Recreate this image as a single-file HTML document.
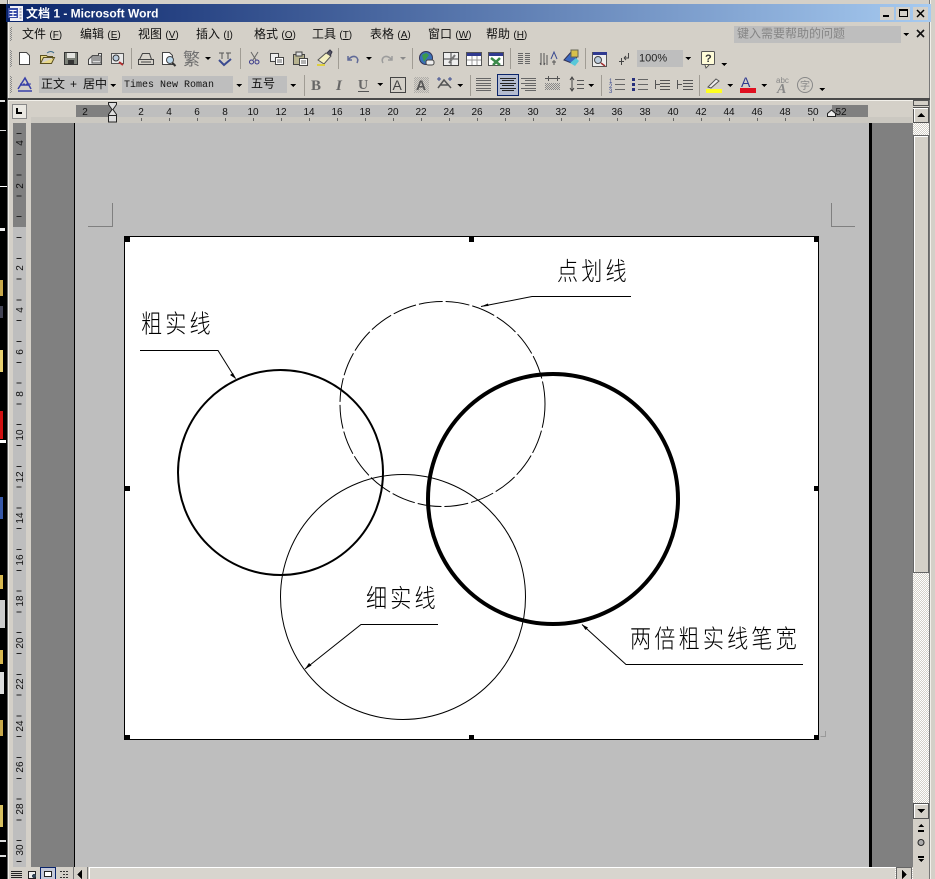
<!DOCTYPE html>
<html><head><meta charset="utf-8"><title>文档 1 - Microsoft Word</title>
<style>
html,body{margin:0;padding:0;width:935px;height:879px;overflow:hidden;background:#000}
svg{display:block}
text{font-family:"Liberation Sans","Noto Sans CJK SC",sans-serif}
.m{font-size:12px;fill:#111}
.m tspan{font-size:10px}
.r{font-size:10px;fill:#111;text-anchor:middle}
.d{font-size:24px;font-weight:300;fill:#000;letter-spacing:3.6px;font-family:"Noto Sans CJK SC",sans-serif}
</style></head><body>
<svg width="935" height="879" viewBox="0 0 935 879" xmlns="http://www.w3.org/2000/svg" shape-rendering="crispEdges">
<defs>
<linearGradient id="tb" x1="0" x2="1" y1="0" y2="0"><stop offset="0" stop-color="#0a246a"/><stop offset="1" stop-color="#a6caf0"/></linearGradient>
<pattern id="ck" width="2" height="2" patternUnits="userSpaceOnUse"><rect width="2" height="2" fill="#d4d0c8"/><rect width="1" height="1" fill="#fff"/><rect x="1" y="1" width="1" height="1" fill="#fff"/></pattern>
<pattern id="ck2" width="2" height="2" patternUnits="userSpaceOnUse"><rect width="2" height="2" fill="#d4d0c8"/><rect width="1" height="1" fill="#888"/><rect x="1" y="1" width="1" height="1" fill="#888"/></pattern>
</defs>
<!-- desktop edge -->
<rect width="7" height="879" fill="#000"/>
<g>
<rect x="0" y="186" width="7" height="1" fill="#fff"/><rect x="0" y="228" width="5" height="3" fill="#eee"/>
<rect x="0" y="280" width="3" height="16" fill="#c8a84a"/><rect x="0" y="306" width="3" height="12" fill="#445"/>
<rect x="0" y="350" width="3" height="22" fill="#e8d070"/><rect x="0" y="411" width="3" height="28" fill="#d01010"/>
<rect x="0" y="440" width="6" height="3" fill="#fff"/><rect x="0" y="497" width="3" height="22" fill="#3858a8"/>
<rect x="0" y="575" width="3" height="14" fill="#d8b850"/><rect x="0" y="600" width="5" height="28" fill="#ccc"/>
<rect x="0" y="650" width="3" height="14" fill="#d8b850"/><rect x="0" y="672" width="4" height="22" fill="#ddd"/>
<rect x="0" y="720" width="3" height="16" fill="#c8a84a"/><rect x="0" y="805" width="3" height="22" fill="#d8c060"/>
<rect x="0" y="840" width="6" height="2" fill="#ddd"/><rect x="0" y="855" width="6" height="2" fill="#ddd"/>
<rect x="0" y="100" width="5" height="2" fill="#ddd"/><rect x="0" y="130" width="6" height="1" fill="#ddd"/>
</g>
<!-- window -->
<rect x="7" y="0" width="928" height="879" fill="#d4d0c8"/>
<rect x="0" y="0" width="935" height="4" fill="#d4d0c8"/>
<rect x="7" y="0" width="1" height="879" fill="#666"/>
<rect x="8" y="0" width="1" height="879" fill="#efece6"/>
<rect x="929" y="0" width="1" height="879" fill="#777"/>
<rect x="930" y="0" width="1" height="879" fill="#f2f0ea"/>
<!-- title bar -->
<rect x="6" y="4" width="925" height="18" fill="url(#tb)"/>
<rect x="10" y="6" width="13" height="15" fill="#f0f0f8"/>
<rect x="8" y="8" width="10" height="10" fill="#3a4ea8"/>
<path d="M9.500 10.500h7M13 10v7M9.500 13.500h7M9.500 16.500h7" stroke="#fff" fill="none"/>
<path d="M19.500 9h2M19.500 12h2M19.500 15h2M19.500 18h2" stroke="#778" fill="none"/>
<text x="26" y="17.500" style="font-size:12px;font-weight:700;fill:#fff">文档 1 - Microsoft Word</text>
<g>
<rect x="880" y="7" width="14" height="13" fill="#d4d0c8"/><rect x="883" y="15" width="6" height="2" fill="#000"/>
<rect x="896" y="7" width="14" height="13" fill="#d4d0c8"/><rect x="899.500" y="9.500" width="8" height="7" fill="none" stroke="#000"/><rect x="899" y="9" width="9" height="2" fill="#000"/>
<rect x="913" y="7" width="15" height="13" fill="#d4d0c8"/><path d="M917 10l7 7M924 10l-7 7" stroke="#000" stroke-width="1.500" fill="none" shape-rendering="auto"/>
</g>
<!-- grippers -->
<rect x="10" y="27" width="2" height="14" fill="url(#ck2)"/><rect x="10" y="50" width="2" height="17" fill="url(#ck2)"/><rect x="10" y="76" width="2" height="17" fill="url(#ck2)"/>
<!-- menu -->
<text class="m" x="22" y="38">文件 <tspan>(<tspan text-decoration="underline">F</tspan>)</tspan></text>
<text class="m" x="80" y="38">编辑 <tspan>(<tspan text-decoration="underline">E</tspan>)</tspan></text>
<text class="m" x="138" y="38">视图 <tspan>(<tspan text-decoration="underline">V</tspan>)</tspan></text>
<text class="m" x="196" y="38">插入 <tspan>(<tspan text-decoration="underline">I</tspan>)</tspan></text>
<text class="m" x="254" y="38">格式 <tspan>(<tspan text-decoration="underline">O</tspan>)</tspan></text>
<text class="m" x="312" y="38">工具 <tspan>(<tspan text-decoration="underline">T</tspan>)</tspan></text>
<text class="m" x="370" y="38">表格 <tspan>(<tspan text-decoration="underline">A</tspan>)</tspan></text>
<text class="m" x="428" y="38">窗口 <tspan>(<tspan text-decoration="underline">W</tspan>)</tspan></text>
<text class="m" x="486" y="38">帮助 <tspan>(<tspan text-decoration="underline">H</tspan>)</tspan></text>
<rect x="734" y="26" width="178" height="17" fill="#bebebe"/>
<rect x="901" y="26" width="11" height="17" fill="#d4d0c8"/>
<text x="737" y="37.500" style="font-size:12px;fill:#858585;font-family:'Noto Sans CJK SC',sans-serif">键入需要帮助的问题</text>
<path d="M903 33h6l-3 3z" fill="#000"/>
<path d="M917 30l7 7M924 30l-7 7" stroke="#111" stroke-width="1.600" fill="none" shape-rendering="auto"/>
<!-- toolbar separators -->
<path d="M131.500 48v21M240.500 48v21M338.500 48v21M412.500 48v21M510.500 48v21M585.500 48v21M304.500 75v21M470.500 75v21M601.500 75v21M699.500 75v21" stroke="#a09c94" fill="none"/>
<!-- row 2 icons -->
<g shape-rendering="auto" fill="none" stroke-width="1">
<path d="M19.500 52.500h7l3 3v9h-10z" fill="#fff" stroke="#444"/>
<path d="M40.500 63.500v-8h6l1 1h5v2M40.500 63.500h11l3-6h-11z" fill="#e8d888" stroke="#5a5020"/><path d="M47 53q4-3 7 0" stroke="#3a6a8a"/>
<rect x="64.500" y="52.500" width="13" height="12" fill="#7c8078" stroke="#333"/><rect x="67" y="53" width="8" height="5" fill="#e4e4e0"/><rect x="68" y="60" width="6" height="4" fill="#333"/>
<path d="M88.500 64.500v-5l4-4h6v-2h3v11z" fill="#eee" stroke="#444"/><rect x="92" y="56" width="9" height="7" fill="#ddd" stroke="#555"/><path d="M93 58h7M93 60h7" stroke="#555"/>
<rect x="111.500" y="53.500" width="12" height="10" fill="#e8e8e8" stroke="#555"/><circle cx="116" cy="58" r="3" fill="#bcd" stroke="#333"/><path d="M119 62l4 3" stroke="#b03030" stroke-width="2"/>
<path d="M139.500 59.500l3-6h7l2 6zM138.500 59.500h15v5h-15z" fill="#d8d4cc" stroke="#444"/><path d="M141 62h10" stroke="#444"/>
<path d="M162.500 52.500h7l3 3v9h-10z" fill="#fff" stroke="#444"/><circle cx="170" cy="60" r="3.500" fill="#bcd8ec" stroke="#444"/><path d="M172.500 63l3 3" stroke="#333" stroke-width="2"/>
<text x="183" y="65" style="font-size:17px;fill:#707070">繁</text>
<path d="M205 57h6l-3 3z" fill="#000"/>
<path d="M219 53h5M222 53v6M226 53h5M228 53v6" stroke="#555"/><path d="M219 60l5 5 7-6" stroke="#3a4a90" stroke-width="2"/>
<path d="M251 52l5 8M258 52l-5 8" stroke="#666"/><circle cx="251.500" cy="62" r="2" stroke="#3a3a8a"/><circle cx="257" cy="62" r="2" stroke="#3a3a8a"/>
<rect x="270.500" y="53.500" width="8" height="8" fill="#eee" stroke="#444"/><rect x="275.500" y="57.500" width="8" height="7" fill="#fff" stroke="#444"/><path d="M277 60h5M277 62h5" stroke="#666"/>
<rect x="293.500" y="54.500" width="11" height="10" fill="#b8b490" stroke="#444"/><rect x="296" y="52" width="6" height="4" fill="#ddd" stroke="#444"/><rect x="299.500" y="58.500" width="8" height="7" fill="#fff" stroke="#444"/><path d="M301 61h5M301 63h5" stroke="#666"/>
<path d="M318 60l8-7 5 3-7 8z" fill="#f4f0c0" stroke="#555"/><path d="M327 53l3-3 2 2-2 4" fill="#556" stroke="#334"/><path d="M317 65h8" stroke="#dfd040" stroke-width="2"/>
<path d="M348 56v4h4M348 60q4-5 8-3 3 2 1 6" stroke="#606a98" stroke-width="1.500"/>
<path d="M366 57h6l-3 3z" fill="#000"/>
<path d="M392 56v4h-4M392 60q-4-5-8-3-3 2-1 6" stroke="#9c9c9c" stroke-width="1.500"/>
<path d="M400 57h6l-3 3z" fill="#8a8a8a"/>
<circle cx="426" cy="58" r="6.500" fill="#3a70b8" stroke="#335"/><path d="M422 55l4-2 3 2-3 4-2 3z" fill="#3a9a4a"/><rect x="426" y="60" width="8" height="5" rx="2" fill="#eee" stroke="#444"/>
<rect x="443.500" y="52.500" width="15" height="13" fill="#eee" stroke="#444"/><path d="M451 53v12M444 59h14" stroke="#444"/><path d="M449 63l6-8" stroke="#777" stroke-width="2"/>
<rect x="466.500" y="52.500" width="15" height="13" fill="#fff" stroke="#555"/><rect x="467" y="53" width="14" height="3" fill="#303a90"/><path d="M467 60h14M472 56v9M477 56v9" stroke="#999"/>
<rect x="488.500" y="52.500" width="15" height="13" fill="#fff" stroke="#555"/><rect x="489" y="53" width="14" height="3" fill="#303a90"/><path d="M491 58l9 7M500 58l-7 7" stroke="#3a8a4a" stroke-width="2.500"/>
<path d="M541 53v12M544 53v12M547 55v10M541 65l-1-2M544 65l1-2" stroke="#555"/><path d="M551 59l3-7 3 7" stroke="#3a4a90"/><path d="M552 62h4M554 60v5" stroke="#555"/>
<path d="M564 60l8-9 6 3-4 10z" fill="#3a68c0" stroke="#335"/><rect x="571" y="50" width="7" height="7" fill="#d8c04a" stroke="#665"/><path d="M570 63l6-5 3 3-4 5z" fill="#58c8d8"/>
<rect x="592.500" y="52.500" width="14" height="14" fill="#eee" stroke="#555"/><rect x="593" y="52" width="14" height="3" fill="#303a90"/><circle cx="598" cy="60" r="3.500" fill="#bcd" stroke="#444"/><path d="M601 63l4 3" stroke="#a03030" stroke-width="1.500"/>
<path d="M628.500 53v5h-4M624 58l2-2M624 58l2 2M621.500 58v7M619 61.500h5" stroke="#444"/>
<rect x="637" y="50" width="52" height="17" fill="#bebebe" stroke="none"/>
<rect x="701.500" y="51.500" width="13" height="13" rx="1" fill="#fffcd8" stroke="#555"/><path d="M705 65l1 3 3-3" fill="#fffcd8" stroke="#555"/>
</g>
<path d="M518 53.500h5M525 53.500h5M518 55.500h5M525 55.500h5M518 57.500h5M525 57.500h5M518 59.500h5M525 59.500h5M518 61.500h5M525 61.500h5M518 63.500h5M525 63.500h5" stroke="#666" fill="none" transform="translate(0 0)"/>
<rect x="683" y="50" width="11" height="17" fill="#d4d0c8"/>
<text x="639" y="61.500" style="font-size:11px;fill:#222">100%</text>
<path d="M685 57h6l-3 3z" fill="#000"/>
<text x="705" y="62" style="font-size:11px;font-weight:700;fill:#333">?</text>
<path d="M721 63h6l-3 3z" fill="#000"/>
<!-- row 3 -->
<g shape-rendering="auto" fill="none">
<path d="M18 89l7-11 6 11" stroke="#3840a8" stroke-width="1.500"/><path d="M21 85h8M18 91h14" stroke="#3840a8" stroke-width="1.500"/><path d="M20 84h12" stroke="#3840a8" stroke-dasharray="2 1"/>
</g>
<rect x="39" y="76" width="79" height="17" fill="#bebebe"/><rect x="108" y="76" width="11" height="17" fill="#d4d0c8"/>
<text x="41" y="88" style="font-size:12px;fill:#111;font-family:'Noto Sans CJK SC',sans-serif">正文</text>
<text x="70" y="88" style="font-size:12px;fill:#111">+</text>
<text x="83" y="88" style="font-size:12px;fill:#111;font-family:'Noto Sans CJK SC',sans-serif">居中</text>
<path d="M110 84h6l-3 3z" fill="#000"/>
<rect x="122" y="76" width="122" height="17" fill="#bebebe"/><rect x="233" y="76" width="11" height="17" fill="#d4d0c8"/>
<text x="124" y="87" style="font-size:10px;fill:#111;font-family:'Liberation Mono',monospace">Times New Roman</text>
<path d="M236 84h6l-3 3z" fill="#000"/>
<rect x="248" y="76" width="53" height="17" fill="#bebebe"/><rect x="287" y="76" width="14" height="17" fill="#d4d0c8"/>
<text x="251" y="87.500" style="font-size:12px;fill:#111;font-family:'Noto Sans CJK SC',sans-serif">五号</text>
<path d="M290 84h6l-3 3z" fill="#000"/>
<text x="311" y="90" style="font-size:15px;font-weight:700;fill:#666;font-family:'Liberation Serif',serif">B</text>
<text x="336" y="90" style="font-size:15px;font-weight:700;font-style:italic;fill:#666;font-family:'Liberation Serif',serif">I</text>
<text x="358" y="89" style="font-size:14px;font-weight:700;fill:#666;font-family:'Liberation Serif',serif">U</text>
<path d="M358 91.500h11" stroke="#555" fill="none"/>
<path d="M377 83h6l-3 3z" fill="#000"/>
<rect x="390.500" y="77.500" width="15" height="15" fill="#d4d0c8" stroke="#444"/>
<text x="392.500" y="90" style="font-size:14px;fill:#444">A</text>
<rect x="414" y="77" width="15" height="16" fill="url(#ck2)" opacity=".5"/>
<text x="416" y="90" style="font-size:14px;font-weight:700;fill:#555">A</text>
<g shape-rendering="auto" fill="none" stroke="#555"><path d="M438 88l6-8 7 8M440 85h9" stroke-width="1.500"/><path d="M437 79h4M439 77v4M448 79h4M450 77v4" stroke="#3a4a90"/></g>
<path d="M457 84h6l-3 3z" fill="#000"/>
<path d="M476 78.500h15M476 80.500h15M476 83.500h15M476 85.500h15M476 88.500h15M476 90.500h15" stroke="#666" fill="none"/>
<rect x="497.500" y="74.500" width="21" height="21" fill="#b4bcd0" stroke="#0a246a"/>
<path d="M500 78.500h16M502 80.500h12M500 83.500h16M502 85.500h12M500 88.500h16M502 90.500h12" stroke="#222" fill="none"/>
<path d="M521 78.500h15M525 80.500h11M521 83.500h15M525 85.500h11M521 88.500h15M525 90.500h11" stroke="#666" fill="none"/>
<rect x="545" y="83" width="15" height="7" fill="url(#ck2)"/><path d="M545 78.500h15M548.500 76v5M557.500 76v5" stroke="#555" fill="none"/>
<g shape-rendering="auto" fill="none" stroke="#444"><path d="M572 78v12M570 80l2-3 2 3M570 88l2 3 2-3"/></g>
<path d="M577 80.500h7M577 84.500h7M577 88.500h7" stroke="#555" fill="none"/>
<path d="M588 84h6l-3 3z" fill="#000"/>
<path d="M615 79.500h10M615 84.500h10M615 89.500h10" stroke="#666" fill="none"/>
<text x="609" y="83" style="font-size:6px;fill:#3a4a90">1</text><text x="609" y="88" style="font-size:6px;fill:#3a4a90">2</text><text x="609" y="93" style="font-size:6px;fill:#3a4a90">3</text>
<path d="M638 79.500h10M638 84.500h10M638 89.500h10" stroke="#666" fill="none"/><rect x="632" y="78" width="3" height="3" fill="#28307c"/><rect x="632" y="83" width="3" height="3" fill="#28307c"/><rect x="632" y="88" width="3" height="3" fill="#28307c"/>
<path d="M660 80.500h10M660 83.500h10M660 86.500h10M660 89.500h10M655 84.500h5M655.500 80v9" stroke="#555" fill="none"/>
<path d="M683 80.500h10M683 83.500h10M683 86.500h10M683 89.500h10M677 84.500h5M677.500 80v9" stroke="#555" fill="none"/>
<rect x="706" y="89" width="16" height="4" fill="#ffff20"/>
<g shape-rendering="auto" fill="none" stroke="#555"><path d="M708 87l8-8 3 2-8 7z" fill="#eee"/></g>
<path d="M727 84h6l-3 3z" fill="#000"/>
<rect x="740" y="88" width="16" height="5" fill="#e01020"/>
<text x="741" y="87" style="font-size:14px;fill:#303a90">A</text>
<path d="M761 84h6l-3 3z" fill="#000"/>
<text x="776" y="83" style="font-size:8px;fill:#888">abc</text>
<text x="777" y="93" style="font-size:14px;font-weight:700;font-style:italic;fill:#888;font-family:'Liberation Serif',serif">A</text>
<circle cx="805" cy="85" r="7.500" fill="none" stroke="#888" shape-rendering="auto"/>
<text x="800" y="89" style="font-size:10px;fill:#888;font-family:'Noto Sans CJK SC',sans-serif">字</text>
<path d="M819 88h6l-3 3z" fill="#000"/>
<!-- divider -->
<rect x="7" y="98" width="923" height="2" fill="#4a4a4a"/>
<rect x="9" y="100" width="920" height="1" fill="#f2f0ea"/>
<!-- h ruler -->
<rect x="76" y="105" width="792" height="12" fill="#bebebe"/>
<rect x="76" y="105" width="37" height="12" fill="#808080"/><rect x="832" y="105" width="36" height="12" fill="#808080"/>
<rect x="31" y="117" width="881" height="6" fill="#cbc8c1"/>
<rect x="12.500" y="104.500" width="14" height="14" fill="#eae8e2" stroke="#888"/>
<path d="M16 108v6h6v-2h-4v-4z" fill="#000"/>
<g>
<text class="r" x="85" y="115">2</text><text class="r" x="141" y="115">2</text><text class="r" x="169" y="115">4</text><text class="r" x="197" y="115">6</text><text class="r" x="225" y="115">8</text><text class="r" x="253" y="115">10</text><text class="r" x="281" y="115">12</text><text class="r" x="309" y="115">14</text><text class="r" x="337" y="115">16</text><text class="r" x="365" y="115">18</text><text class="r" x="393" y="115">20</text><text class="r" x="421" y="115">22</text><text class="r" x="449" y="115">24</text><text class="r" x="477" y="115">26</text><text class="r" x="505" y="115">28</text><text class="r" x="533" y="115">30</text><text class="r" x="561" y="115">32</text><text class="r" x="589" y="115">34</text><text class="r" x="617" y="115">36</text><text class="r" x="645" y="115">38</text><text class="r" x="673" y="115">40</text><text class="r" x="701" y="115">42</text><text class="r" x="729" y="115">44</text><text class="r" x="757" y="115">46</text><text class="r" x="785" y="115">48</text><text class="r" x="813" y="115">50</text><text class="r" x="841" y="115">52</text>
</g>
<path d="M141.500 118v3M169.500 118v3M197.500 118v3M225.500 118v3M253.500 118v3M281.500 118v3M309.500 118v3M337.500 118v3M365.500 118v3M393.500 118v3M421.500 118v3M449.500 118v3M477.500 118v3M505.500 118v3M533.500 118v3M561.500 118v3M589.500 118v3M617.500 118v3M645.500 118v3M673.500 118v3M701.500 118v3M729.500 118v3M757.500 118v3M785.500 118v3M813.500 118v3" stroke="#666" fill="none"/>
<path d="M108.500 102.500h8v2l-3.500 5 3.500 5v2h-8v-2l3.500-5-3.500-5z" fill="#ddd" stroke="#222" shape-rendering="auto"/>
<rect x="108.500" y="115.500" width="8" height="6.500" fill="#ddd" stroke="#222"/>
<path d="M827.500 116.500v-3l4-3.500 4 3.500v3z" fill="#eee" stroke="#222" shape-rendering="auto"/>
<!-- side panels -->
<rect x="13" y="123" width="13" height="744" fill="#bebebe"/>
<rect x="13" y="123" width="13" height="104" fill="#808080"/>
<rect x="31" y="123" width="43" height="744" fill="#808080"/>
<rect x="74" y="123" width="1" height="744" fill="#000"/>
<rect x="75" y="123" width="794" height="744" fill="#bebebe"/>
<rect x="869" y="123" width="3" height="744" fill="#000"/>
<rect x="872" y="123" width="41" height="744" fill="#808080"/>
<!-- v ruler -->
<path d="M19 133V866" stroke="#222" stroke-width="5" stroke-dasharray="1 19.800" fill="none"/>
<g>
<text class="r" transform="translate(23 143) rotate(-90)">4</text>
<text class="r" transform="translate(23 186) rotate(-90)">2</text>
<text class="r" transform="translate(23 268) rotate(-90)">2</text>
<text class="r" transform="translate(23 310) rotate(-90)">4</text>
<text class="r" transform="translate(23 352) rotate(-90)">6</text>
<text class="r" transform="translate(23 394) rotate(-90)">8</text>
<text class="r" transform="translate(23 435) rotate(-90)">10</text>
<text class="r" transform="translate(23 477) rotate(-90)">12</text>
<text class="r" transform="translate(23 518) rotate(-90)">14</text>
<text class="r" transform="translate(23 560) rotate(-90)">16</text>
<text class="r" transform="translate(23 601) rotate(-90)">18</text>
<text class="r" transform="translate(23 643) rotate(-90)">20</text>
<text class="r" transform="translate(23 684) rotate(-90)">22</text>
<text class="r" transform="translate(23 726) rotate(-90)">24</text>
<text class="r" transform="translate(23 767) rotate(-90)">26</text>
<text class="r" transform="translate(23 809) rotate(-90)">28</text>
<text class="r" transform="translate(23 850) rotate(-90)">30</text>
</g>
<!-- page corners -->
<path d="M112.500 203v23.500H88M831.500 203v23.500H855" stroke="#808080" fill="none"/>
<!-- drawing -->
<rect x="124.500" y="236.500" width="694" height="503" fill="#fff" stroke="#000"/>
<g fill="none" stroke="#000" shape-rendering="auto">
<circle cx="442.500" cy="404" r="102.500" stroke-width="1" stroke-dasharray="24 3"/>
<circle cx="403" cy="597" r="122.500" stroke-width="1"/>
<circle cx="280.500" cy="472.500" r="102.500" stroke-width="2"/>
<circle cx="553" cy="499" r="125" stroke-width="4"/>
<path d="M140 350.500h78l17.500 28" stroke-width="1"/>
<path d="M631 296.500h-99l-51 10" stroke-width="1"/>
<path d="M438 624.500h-77l-56 44.500" stroke-width="1"/>
<path d="M803 664.500H626l-44-40" stroke-width="1"/>
<path d="M236 379l-6-4 3-2z" fill="#000" stroke="none"/>
<path d="M481 306.500l7-3 .5 2.500z" fill="#000" stroke="none"/>
<path d="M305 669l4-6 2.500 2.500z" fill="#000" stroke="none"/>
<path d="M582 624.500l6 3-2.500 2.500z" fill="#000" stroke="none"/>
</g>
<text class="d" transform="translate(141 332.500) scale(.88 1.05)">粗实线</text>
<text class="d" transform="translate(557 280) scale(.88 1.05)">点划线</text>
<text class="d" transform="translate(366 607) scale(.88 1.05)">细实线</text>
<text class="d" transform="translate(630 647.500) scale(.88 1.05)">两倍粗实线笔宽</text>
<g fill="#000">
<rect x="125" y="237" width="5" height="5"/><rect x="469" y="237" width="5" height="5"/><rect x="814" y="237" width="5" height="5"/>
<rect x="125" y="486" width="5" height="5"/><rect x="814" y="486" width="5" height="5"/>
<rect x="125" y="735" width="5" height="5"/><rect x="469" y="735" width="5" height="5"/><rect x="814" y="735" width="5" height="5"/>
</g>
<path d="M825.500 731v5.500h-5" stroke="#999" fill="none"/>
<!-- v scrollbar -->
<rect x="913" y="123" width="16" height="744" fill="url(#ck)"/>
<rect x="913" y="100" width="16" height="23" fill="#d4d0c8"/>
<rect x="913.500" y="100.500" width="15" height="5" fill="#d4d0c8" stroke="#555"/>
<rect x="913.500" y="107.500" width="15" height="15" fill="#d4d0c8" stroke="#555"/><path d="M913 108.500h15M914.500 108v14" stroke="#fff" fill="none"/>
<path d="M917 117h8l-4-4z" fill="#000"/>
<rect x="913.500" y="135.500" width="15" height="437" fill="#d4d0c8" stroke="#666"/><path d="M914 136.500h14M914.500 136v436" stroke="#fff" fill="none"/>
<rect x="913.500" y="803.500" width="15" height="15" fill="#d4d0c8" stroke="#555"/><path d="M914 804.500h14M914.500 804v14" stroke="#fff" fill="none"/>
<path d="M917 809h8l-4 4z" fill="#000"/>
<rect x="913" y="819" width="16" height="60" fill="#d4d0c8"/>
<path d="M918 827h6l-3-3zM918 832h6v-2h-6z" fill="#000"/>
<circle cx="921" cy="842.500" r="3" fill="#aaa" stroke="#222" shape-rendering="auto"/>
<path d="M918 856h6v2h-6zM918 859h6l-3 3z" fill="#000"/>
<!-- h scrollbar -->
<rect x="9" y="867" width="904" height="12" fill="#d4d0c8"/>
<path d="M11 871.500h11M11 873.500h11M11 875.500h11M11 877.500h11" stroke="#222" fill="none"/>
<rect x="28.500" y="871.500" width="7" height="7" fill="#eee" stroke="#222"/><circle cx="34" cy="876" r="2" fill="#345"/>
<rect x="40.500" y="867.500" width="15" height="12" fill="#c4c8d8" stroke="#0a246a"/><rect x="44.500" y="871.500" width="7" height="5" fill="#fff" stroke="#222"/>
<path d="M60 871.500h9M63 874.500h6M60 877.500h9" stroke="#333" stroke-dasharray="2 1" fill="none"/>
<rect x="73" y="867" width="14" height="12" fill="#d4d0c8"/><path d="M73.500 867v12M87.500 867v12" stroke="#777" fill="none"/><path d="M82 870v9l-5-4.500z" fill="#000"/>
<rect x="89" y="867" width="806" height="12" fill="#d8d5ce"/><path d="M89 867.500h806M89.500 867v12" stroke="#fff" fill="none"/>
<rect x="895" y="867" width="18" height="12" fill="url(#ck)"/>
<rect x="896.500" y="867.500" width="15" height="12" fill="#d4d0c8" stroke="#666"/><path d="M902 870v9l5-4.500z" fill="#000"/>
</svg>
</body></html>
